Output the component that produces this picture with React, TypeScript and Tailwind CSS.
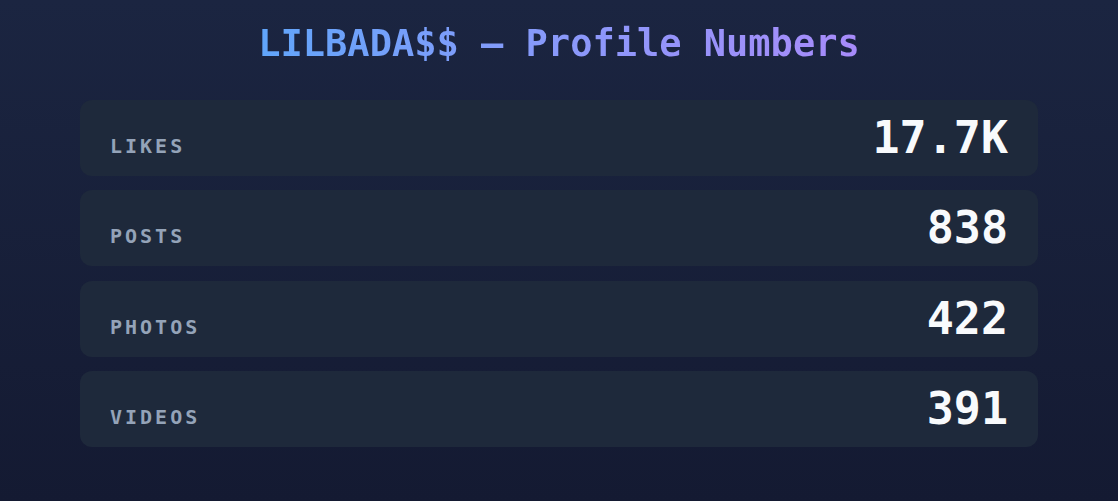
import React from 'react';

export default function App() {
  const stats = [
    { label: 'Likes', value: '17.7K' },
    { label: 'Posts', value: '838' },
    { label: 'Photos', value: '422' },
    { label: 'Videos', value: '391' },
  ];

  return (
    <div
      className="min-h-[501px] w-full bg-gradient-to-b from-[#1b2541] to-[#141a32] px-20 pt-6 pb-10"
      style={{ fontFamily: '"DejaVu Sans Mono", "Liberation Mono", monospace' }}
    >
      <div className="text-center">
        <h1 className="inline-block bg-gradient-to-r from-[#60a5fa] to-[#a78bfa] bg-clip-text text-[37px] font-bold leading-10 text-transparent">
          LILBADA$$ — Profile Numbers
        </h1>
      </div>
      <div className="mt-9 flex flex-col gap-[14.3px]">
        {stats.map((stat) => (
          <div
            key={stat.label}
            className="flex h-[76px] items-baseline justify-between rounded-xl bg-[#1e293b] px-[30px] py-4"
          >
            <span className="text-[20px] font-semibold uppercase leading-none tracking-[0.15em] text-[#94a3b8]">
              {stat.label}
            </span>
            <span className="text-[45px] font-bold leading-[44px] text-[#f8fafc]">
              {stat.value}
            </span>
          </div>
        ))}
      </div>
    </div>
  );
}
